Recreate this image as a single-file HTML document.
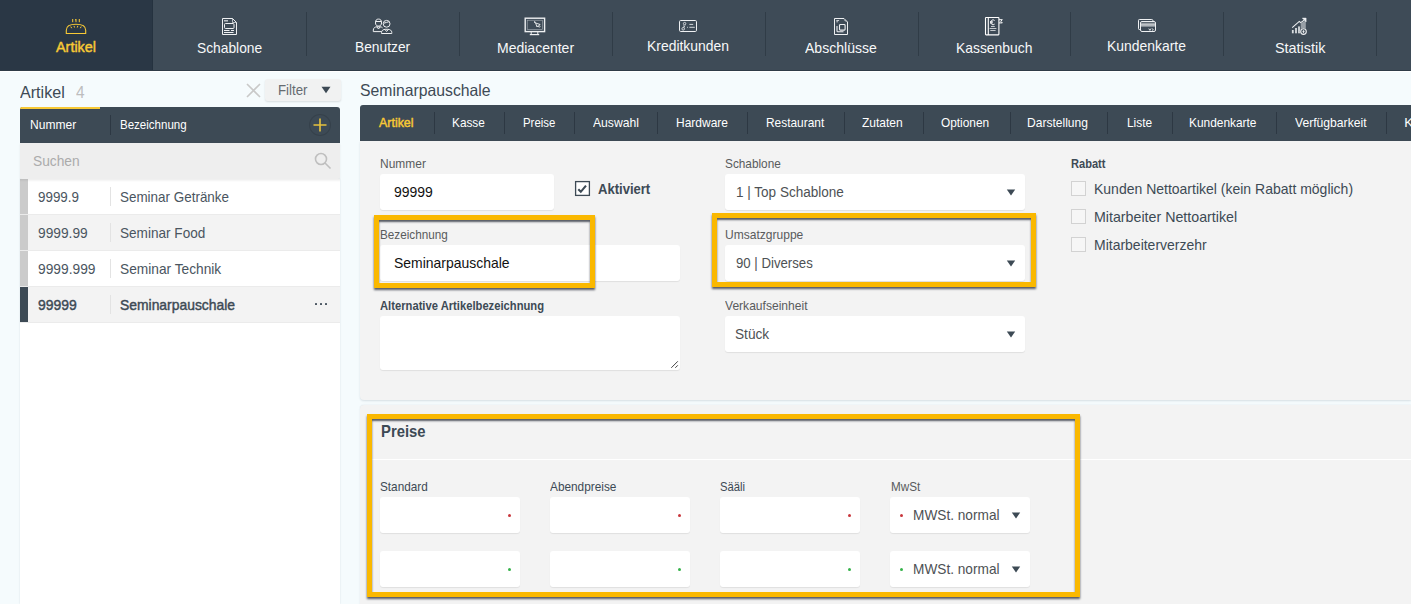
<!DOCTYPE html>
<html><head><meta charset="utf-8"><style>
html,body{margin:0;padding:0}
body{width:1411px;height:604px;overflow:hidden;position:relative;background:#f5fbfd;font-family:"Liberation Sans", sans-serif}
.t{position:absolute;white-space:nowrap;line-height:1}
.r{position:absolute}
.ic{position:absolute;overflow:visible}
.hl{position:absolute;border:5px solid #fab800;box-shadow:0 2px 2px rgba(20,25,40,.7), inset 0 2px 2px rgba(20,25,40,.7)}
</style></head><body>
<div class="r" style="left:0px;top:0px;width:1411px;height:71px;background:#3e4b57"></div>
<div class="r" style="left:0px;top:0px;width:153px;height:71px;background:#2a3745"></div>
<div class="r" style="left:152px;top:0px;width:1px;height:71px;background:#25323f"></div>
<div class="r" style="left:0px;top:70px;width:1411px;height:1px;background:#2f3b47"></div>
<div class="r" style="left:0px;top:71px;width:1411px;height:1px;background:#ffffff"></div>
<div class="r" style="left:306px;top:12px;width:1px;height:44px;background:#303c47"></div>
<div class="r" style="left:459px;top:12px;width:1px;height:44px;background:#303c47"></div>
<div class="r" style="left:612px;top:12px;width:1px;height:44px;background:#303c47"></div>
<div class="r" style="left:765px;top:12px;width:1px;height:44px;background:#303c47"></div>
<div class="r" style="left:918px;top:12px;width:1px;height:44px;background:#303c47"></div>
<div class="r" style="left:1070px;top:12px;width:1px;height:44px;background:#303c47"></div>
<div class="r" style="left:1223px;top:12px;width:1px;height:44px;background:#303c47"></div>
<div class="r" style="left:1376px;top:12px;width:1px;height:44px;background:#303c47"></div>
<div class="t" style="left:56.20px;top:39.10px;font-size:15px;color:#f8c935;-webkit-text-stroke:0.45px currentColor;transform:scaleX(0.9592);transform-origin:0 0;">Artikel</div>
<div class="t" style="left:196.50px;top:40.10px;font-size:15px;color:#f7f8f9;transform:scaleX(0.9196);transform-origin:0 0;">Schablone</div>
<div class="t" style="left:354.60px;top:39.10px;font-size:15px;color:#f7f8f9;transform:scaleX(0.9183);transform-origin:0 0;">Benutzer</div>
<div class="t" style="left:496.60px;top:40.10px;font-size:15px;color:#f7f8f9;transform:scaleX(0.9333);transform-origin:0 0;">Mediacenter</div>
<div class="t" style="left:647.20px;top:38.40px;font-size:15px;color:#f7f8f9;transform:scaleX(0.9276);transform-origin:0 0;">Kreditkunden</div>
<div class="t" style="left:805.10px;top:40.10px;font-size:15px;color:#f7f8f9;transform:scaleX(0.9361);transform-origin:0 0;">Abschlüsse</div>
<div class="t" style="left:955.70px;top:40.10px;font-size:15px;color:#f7f8f9;transform:scaleX(0.9249);transform-origin:0 0;">Kassenbuch</div>
<div class="t" style="left:1107.40px;top:38.40px;font-size:15px;color:#f7f8f9;transform:scaleX(0.9271);transform-origin:0 0;">Kundenkarte</div>
<div class="t" style="left:1274.50px;top:40.10px;font-size:15px;color:#f7f8f9;transform:scaleX(0.9601);transform-origin:0 0;">Statistik</div>

<svg class="ic" style="left:64px;top:17px" width="24" height="19" viewBox="0 0 24 19" fill="none" stroke="#f8c935" stroke-width="1.1">
 <path d="M2.3 16.5 V13.2 C2.3 9.3 6 7.3 12 7.3 C18 7.3 21.7 9.3 21.7 13.2 V16.5 Z"/>
 <path d="M6.8 9.6 l.9 1.6 M10 8.9 l.5 1.6 M13.8 8.9 l-.5 1.6 M17.2 9.6 l-.9 1.6" stroke-width="1"/>
 <path d="M8.7 2 v3.2 M12 2 v3.2 M15.3 2 v3.2 M11 2.8 h1" stroke-width="1"/>
</svg>
<svg class="ic" style="left:222px;top:18px" width="16" height="18" viewBox="0 0 16 18" fill="none" stroke="#eef0f2" stroke-width="1">
 <path d="M0.5 0.5 H10.5 L14.5 4.5 V16.5 H0.5 Z"/>
 <path d="M10.5 0.5 V4.5 H14.5" stroke-width=".7"/>
 <rect x="2.5" y="5.5" width="9.5" height="5" rx="1"/>
 <path d="M2 2.8 H6" stroke-width="1.4" stroke="#c9ced2"/>
 <path d="M2 12.5 H7.5 M9 12.5 H12 M2 14.5 H11.5"/>
</svg>
<svg class="ic" style="left:372px;top:18px" width="22" height="17" viewBox="0 0 22 17" fill="none" stroke="#eef0f2" stroke-width="1">
 <path d="M3.5 5 C3.5 2 4.5 1.1 6.5 1.1 C8.5 1.1 9.5 2 9.5 5 C9.5 7 8.3 8 6.5 8 C4.7 8 3.5 7 3.5 5 Z"/>
 <path d="M3.5 3.5 H9.5"/>
 <path d="M1.3 13.6 V12 C1.3 10 3 8.8 5 8.8 H8 C9.2 8.8 10 9.2 10.5 9.8"/>
 <path d="M1.3 13.6 H9.5"/>
 <path d="M4.8 8.8 L6.5 11 L8.2 8.8"/>
 <circle cx="14.6" cy="5.8" r="3.4"/>
 <path d="M12 5.2 C13.5 4.6 15.2 4.2 16.8 3.8"/>
 <path d="M9.5 15.5 V14.5 C9.5 12.5 11.3 11.3 13.5 11.3 H15.8 C18 11.3 19.8 12.5 19.8 14.5 V15.5 Z"/>
 <path d="M12.8 11.3 L14.6 13.5 L16.4 11.3"/>
</svg>
<svg class="ic" style="left:524px;top:17px" width="22" height="19" viewBox="0 0 22 19" fill="none" stroke="#eef0f2" stroke-width="1.4">
 <rect x="1.2" y="1.2" width="19.4" height="13.4"/>
 <rect x="3.2" y="3.2" width="15.4" height="9.4" stroke-width=".6" stroke="#aab2b8"/>
 <path d="M7.2 14.8 v2.2 M13.8 14.8 v2.2" stroke-width="1"/>
 <path d="M5.8 17.6 H15.2" stroke-width="1.2"/>
 <path d="M10 5.3 l1.8 .3 M10.6 4 l.3 1.6" stroke-width=".8"/>
 <path d="M11.6 6 L13 10 L14 8.8 L15.3 10.3 L16 9.6 L14.8 8.2 L16.2 7.5 Z" stroke-width=".9"/>
</svg>
<svg class="ic" style="left:678px;top:19px" width="20" height="14" viewBox="0 0 20 14" fill="none" stroke="#eef0f2" stroke-width="1">
 <rect x="1.5" y="1.5" width="17" height="11" rx="1.2"/>
 <circle cx="6.6" cy="4.6" r="1.2" stroke-width=".8"/>
 <path d="M5.2 6.6 L6.8 8.2 M7 6.5 L5.6 8.4" stroke-width=".8"/>
 <circle cx="5.2" cy="9.8" r="1.3" stroke-width=".8"/>
 <path d="M9.2 8.3 h.8" stroke-width=".9"/>
 <path d="M11.4 5.4 H15.2 M11.4 8.3 H16.8" stroke-width="1" stroke="#d3d7db"/>
</svg>
<svg class="ic" style="left:833px;top:17px" width="16" height="19" viewBox="0 0 16 19" fill="none" stroke="#eef0f2" stroke-width="1">
 <path d="M1.5 1.5 H11 L14.5 5 V17.5 H1.5 Z"/>
 <path d="M11.3 2.8 L13.2 4.7" stroke-width=".8"/>
 <rect x="6.5" y="7.5" width="5.6" height="5.6" rx=".9" stroke-width="1.1"/>
 <path d="M4 9 V14 C4 14.5 4.3 14.8 4.8 14.8 H10.5" stroke-width="1.1"/>
 <path d="M3.3 3.5 h2.8 M3.3 4.8 h1.8" stroke="#c9ced2"/>
</svg>
<svg class="ic" style="left:984px;top:16px" width="20" height="20" viewBox="0 0 20 20" fill="none" stroke="#ffffff" stroke-width="1.1">
 <rect x="1.5" y="1.5" width="13.4" height="17.4" rx=".6"/>
 <path d="M4.3 1.5 V18.9"/>
 <path d="M15 3.7 H18.3 L16.8 5.3 L18.3 6.9 H15" stroke-width="1"/>
 <path d="M10.6 4.5 C10.2 4.1 9.7 3.9 9.1 3.9 C7.7 3.9 6.8 5 6.8 6.3 C6.8 7.6 7.7 8.7 9.1 8.7 C9.7 8.7 10.2 8.5 10.6 8.1 M6 5.8 H8.8 M6 6.9 H8.8" stroke-width="1"/>
 <path d="M7 10.5 H10.8 M5.6 12.5 H12.4 M6.3 14.5 H11.6" stroke-width="1" stroke="#c5cace"/>
</svg>
<svg class="ic" style="left:1137px;top:18px" width="20" height="16" viewBox="0 0 20 16" fill="none" stroke="#eef0f2" stroke-width="1">
 <path d="M3 11.5 H2.3 C1.8 11.5 1.5 11.2 1.5 10.7 V2.3 C1.5 1.8 1.8 1.5 2.3 1.5 H14.8 C15.5 1.5 16 2 16 2.7 V3.2"/>
 <rect x="3.5" y="3.5" width="15" height="10" rx="1.5"/>
 <rect x="4" y="4.6" width="14" height="3.8" fill="#8e969d" stroke="none"/>
 <path d="M4 6.3 H18 M4 7.9 H18" stroke="#d5d9dc" stroke-width=".8"/>
 <path d="M11.8 10.6 L12.9 12.4 L13.9 10.6 M15.2 10.4 L16.3 11.9 L15.2 12.4" stroke-width=".9"/>
</svg>
<svg class="ic" style="left:1291px;top:17px" width="17" height="19" viewBox="0 0 17 19" fill="none" stroke="#eef0f2" stroke-width="1.1">
 <path d="M9.7 6.3 L14.8 3.6 V14 H9.7 Z" fill="#98a0a7" stroke="none"/>
 <path d="M1.2 10.6 L8.3 4.4 L9.7 5.6 L13.2 3.1"/>
 <path d="M11.3 1.1 H15.1 V4.9 Z" fill="#eef0f2" stroke-width=".5"/>
 <rect x="0.9" y="13" width="1.8" height="3.3" fill="#d9dde0" stroke="none"/>
 <rect x="4.1" y="11" width="1.8" height="5.3" fill="#d9dde0" stroke="none"/>
 <rect x="7.1" y="9.4" width="1.8" height="6.9" fill="#d9dde0" stroke="none"/>
 <circle cx="12.5" cy="14.6" r="3.6" fill="#3e4b57" stroke="none"/>
 <circle cx="12.5" cy="14.6" r="2.8" fill="#3e4b57"/>
 <path d="M12.5 12.9 L13.6 14.3 L12.5 16.4 L11.4 14.3 Z" fill="#eef0f2" stroke="none"/>
</svg>

<div class="t" style="left:20.20px;top:83.90px;font-size:16.3px;color:#3d4a55;transform:scaleX(0.9890);transform-origin:0 0;">Artikel</div>
<div class="t" style="left:75.80px;top:83.90px;font-size:16.3px;color:#bdbdbd;transform:scaleX(0.9451);transform-origin:0 0;">4</div>
<svg class="ic" style="left:246px;top:83px" width="15" height="15" viewBox="0 0 15 15" stroke="#c9c9c9" stroke-width="1.6"><path d="M1 1 L14 14 M14 1 L1 14"/></svg>
<div class="r" style="left:265px;top:79px;width:76px;height:22px;background:#f1f2f2;border-radius:3px;box-shadow:0 1px 2px rgba(0,0,0,.12)"></div>
<div class="t" style="left:277.50px;top:82.63px;font-size:14.5px;color:#666b70;transform:scaleX(0.9161);transform-origin:0 0;">Filter</div>
<svg class="ic" style="left:321px;top:86px" width="10" height="8" viewBox="0 0 10 8"><path d="M0.5 0.8 H9.5 L5 7.2 Z" fill="#3d4a55"/></svg>
<div class="r" style="left:20px;top:107px;width:320px;height:36px;background:#3d4a55;border-radius:3px 3px 0 0"></div>
<div class="r" style="left:20px;top:107px;width:80px;height:2px;background:#f8c935;border-radius:3px 0 0 0"></div>
<div class="t" style="left:30.30px;top:118.54px;font-size:12px;color:#ffffff;transform:scaleX(1.0043);transform-origin:0 0;">Nummer</div>
<div class="r" style="left:110px;top:115px;width:1px;height:20px;background:#2d3843"></div>
<div class="t" style="left:120.40px;top:118.54px;font-size:12px;color:#ffffff;transform:scaleX(0.9611);transform-origin:0 0;">Bezeichnung</div>
<div class="r" style="left:310px;top:115px;width:20px;height:20px;border-radius:50%;box-shadow:0 0 0 1px rgba(0,0,0,.12)"></div>
<svg class="ic" style="left:313px;top:118px" width="14" height="14" viewBox="0 0 14 14" stroke="#e6c23e" stroke-width="1.6"><path d="M7 0.5 V13.5 M0.5 7 H13.5"/></svg>
<div class="r" style="left:20px;top:179px;width:320px;height:425px;background:#ffffff;box-shadow:0 0 1.5px rgba(40,70,90,.15)"></div>
<div class="r" style="left:20px;top:143px;width:320px;height:36px;background:#eeeeee;box-shadow:0 1px 2px rgba(0,0,0,.08);border-radius:0 0 2px 2px"></div>
<div class="t" style="left:33.30px;top:153.40px;font-size:15px;color:#ababab;transform:scaleX(0.9175);transform-origin:0 0;">Suchen</div>
<svg class="ic" style="left:313.5px;top:151.5px" width="18" height="18" viewBox="0 0 18 18" fill="none" stroke="#bfbfbf" stroke-width="1.6"><circle cx="7" cy="7" r="5.5"/><path d="M11 11 L16.5 16.5"/></svg>
<div class="r" style="left:20px;top:179px;width:320px;height:36px;background:#ffffff"></div>
<div class="r" style="left:20px;top:214px;width:320px;height:1px;background:#ebebeb"></div>
<div class="r" style="left:20px;top:179px;width:8px;height:35px;background:#cbcbcb"></div>
<div class="r" style="left:110px;top:187px;width:1px;height:19px;background:#e3e3e3"></div>
<div class="t" style="left:37.80px;top:189.10px;font-size:15px;color:#4a5560;transform:scaleX(0.8932);transform-origin:0 0;">9999.9</div>
<div class="t" style="left:120.00px;top:189.10px;font-size:15px;color:#4a5560;transform:scaleX(0.8956);transform-origin:0 0;">Seminar Getränke</div>
<div class="r" style="left:20px;top:215px;width:320px;height:36px;background:#f3f3f3"></div>
<div class="r" style="left:20px;top:250px;width:320px;height:1px;background:#ebebeb"></div>
<div class="r" style="left:20px;top:215px;width:8px;height:35px;background:#cbcbcb"></div>
<div class="r" style="left:110px;top:223px;width:1px;height:19px;background:#e3e3e3"></div>
<div class="t" style="left:37.80px;top:225.10px;font-size:15px;color:#4a5560;transform:scaleX(0.9170);transform-origin:0 0;">9999.99</div>
<div class="t" style="left:120.00px;top:225.10px;font-size:15px;color:#4a5560;transform:scaleX(0.9055);transform-origin:0 0;">Seminar Food</div>
<div class="r" style="left:20px;top:251px;width:320px;height:36px;background:#ffffff"></div>
<div class="r" style="left:20px;top:286px;width:320px;height:1px;background:#ebebeb"></div>
<div class="r" style="left:20px;top:251px;width:8px;height:35px;background:#cbcbcb"></div>
<div class="r" style="left:110px;top:259px;width:1px;height:19px;background:#e3e3e3"></div>
<div class="t" style="left:37.80px;top:261.10px;font-size:15px;color:#4a5560;transform:scaleX(0.9185);transform-origin:0 0;">9999.999</div>
<div class="t" style="left:120.00px;top:261.10px;font-size:15px;color:#4a5560;transform:scaleX(0.9151);transform-origin:0 0;">Seminar Technik</div>
<div class="r" style="left:20px;top:287px;width:320px;height:36px;background:#f3f3f3"></div>
<div class="r" style="left:20px;top:322px;width:320px;height:1px;background:#ebebeb"></div>
<div class="r" style="left:20px;top:287px;width:8px;height:35px;background:#3d4a55"></div>
<div class="r" style="left:110px;top:295px;width:1px;height:19px;background:#e3e3e3"></div>
<div class="t" style="left:37.80px;top:297.10px;font-size:15px;color:#3d4a55;-webkit-text-stroke:0.45px currentColor;transform:scaleX(0.9305);transform-origin:0 0;">99999</div>
<div class="t" style="left:120.00px;top:297.10px;font-size:15px;color:#3d4a55;-webkit-text-stroke:0.45px currentColor;transform:scaleX(0.9259);transform-origin:0 0;">Seminarpauschale</div>
<div class="r" style="left:20px;top:179px;width:320px;height:3px;background:linear-gradient(rgba(0,0,0,.07),rgba(0,0,0,0))"></div>
<div class="r" style="left:315px;top:303px;width:2px;height:2px;background:#4a5560;border-radius:.5px"></div>
<div class="r" style="left:320px;top:303px;width:2px;height:2px;background:#4a5560;border-radius:.5px"></div>
<div class="r" style="left:325px;top:303px;width:2px;height:2px;background:#4a5560;border-radius:.5px"></div>
<div class="t" style="left:360.40px;top:82.03px;font-size:16.5px;color:#3d4a55;transform:scaleX(0.9554);transform-origin:0 0;">Seminarpauschale</div>
<div class="r" style="left:360px;top:105px;width:1051px;height:36px;background:#3d4a55;border-radius:3px 0 0 0"></div>
<div class="t" style="left:378.80px;top:115.83px;font-size:13.2px;color:#f8c935;-webkit-text-stroke:0.45px currentColor;transform:scaleX(0.9428);transform-origin:0 0;">Artikel</div>
<div class="t" style="left:451.50px;top:115.83px;font-size:13.2px;color:#ffffff;transform:scaleX(0.8965);transform-origin:0 0;">Kasse</div>
<div class="t" style="left:522.70px;top:115.83px;font-size:13.2px;color:#ffffff;transform:scaleX(0.8636);transform-origin:0 0;">Preise</div>
<div class="t" style="left:592.70px;top:115.83px;font-size:13.2px;color:#ffffff;transform:scaleX(0.9198);transform-origin:0 0;">Auswahl</div>
<div class="t" style="left:676.00px;top:115.83px;font-size:13.2px;color:#ffffff;transform:scaleX(0.9091);transform-origin:0 0;">Hardware</div>
<div class="t" style="left:765.90px;top:115.83px;font-size:13.2px;color:#ffffff;transform:scaleX(0.9025);transform-origin:0 0;">Restaurant</div>
<div class="t" style="left:862.30px;top:115.83px;font-size:13.2px;color:#ffffff;transform:scaleX(0.9107);transform-origin:0 0;">Zutaten</div>
<div class="t" style="left:941.30px;top:115.83px;font-size:13.2px;color:#ffffff;transform:scaleX(0.8993);transform-origin:0 0;">Optionen</div>
<div class="t" style="left:1027.00px;top:115.83px;font-size:13.2px;color:#ffffff;transform:scaleX(0.9132);transform-origin:0 0;">Darstellung</div>
<div class="t" style="left:1126.50px;top:115.83px;font-size:13.2px;color:#ffffff;transform:scaleX(0.9032);transform-origin:0 0;">Liste</div>
<div class="t" style="left:1189.40px;top:115.83px;font-size:13.2px;color:#ffffff;transform:scaleX(0.9025);transform-origin:0 0;">Kundenkarte</div>
<div class="t" style="left:1295.00px;top:115.83px;font-size:13.2px;color:#ffffff;transform:scaleX(0.9203);transform-origin:0 0;">Verfügbarkeit</div>
<div class="t" style="left:1404.30px;top:115.83px;font-size:13.2px;color:#ffffff;">K</div>
<div class="r" style="left:434px;top:112px;width:1px;height:22px;background:#2d3843"></div>
<div class="r" style="left:504px;top:112px;width:1px;height:22px;background:#2d3843"></div>
<div class="r" style="left:574px;top:112px;width:1px;height:22px;background:#2d3843"></div>
<div class="r" style="left:657px;top:112px;width:1px;height:22px;background:#2d3843"></div>
<div class="r" style="left:747px;top:112px;width:1px;height:22px;background:#2d3843"></div>
<div class="r" style="left:844px;top:112px;width:1px;height:22px;background:#2d3843"></div>
<div class="r" style="left:923px;top:112px;width:1px;height:22px;background:#2d3843"></div>
<div class="r" style="left:1010px;top:112px;width:1px;height:22px;background:#2d3843"></div>
<div class="r" style="left:1107px;top:112px;width:1px;height:22px;background:#2d3843"></div>
<div class="r" style="left:1172px;top:112px;width:1px;height:22px;background:#2d3843"></div>
<div class="r" style="left:1276px;top:112px;width:1px;height:22px;background:#2d3843"></div>
<div class="r" style="left:1386px;top:112px;width:1px;height:22px;background:#2d3843"></div>
<div class="r" style="left:360px;top:141px;width:1051px;height:259px;background:#f3f3f3;border-radius:0 0 0 4px;box-shadow:0 1px 2px rgba(40,70,90,.15)"></div>
<div class="r" style="left:360px;top:405px;width:1051px;height:235px;background:#f3f3f3;border-radius:4px 0 0 0;box-shadow:0 0 1.5px rgba(40,70,90,.15)"></div>
<div class="t" style="left:380.40px;top:158.33px;font-size:12.6px;color:#595b5d;transform:scaleX(0.9503);transform-origin:0 0;">Nummer</div>
<div class="r" style="left:380px;top:174px;width:174px;height:36px;background:#fff;border-radius:3px;box-shadow:0 1px 1px rgba(0,0,0,.08)"></div>
<div class="t" style="left:394.00px;top:184.25px;font-size:15.3px;color:#111;transform:scaleX(0.9129);transform-origin:0 0;">99999</div>
<svg class="ic" style="left:574px;top:180px" width="17" height="17" viewBox="0 0 17 17" fill="none" stroke="#3d4a55"><rect x="1.6" y="1.6" width="13.8" height="13.8" fill="#fff" stroke-width="1.3"/><path d="M4.3 9.3 L6.8 11.8 L12 5.6" stroke-width="2.1"/></svg>
<div class="t" style="left:598.40px;top:181.30px;font-size:15px;color:#3d4a55;font-weight:bold;transform:scaleX(0.8700);transform-origin:0 0;">Aktiviert</div>
<div class="t" style="left:380.40px;top:229.33px;font-size:12.6px;color:#595b5d;transform:scaleX(0.9300);transform-origin:0 0;">Bezeichnung</div>
<div class="r" style="left:380px;top:245px;width:300px;height:36px;background:#fff;border-radius:3px;box-shadow:0 1px 1px rgba(0,0,0,.08)"></div>
<div class="t" style="left:394.00px;top:255.30px;font-size:15px;color:#111;transform:scaleX(0.9300);transform-origin:0 0;">Seminarpauschale</div>
<div class="t" style="left:380.20px;top:299.66px;font-size:12.8px;color:#3d4a55;font-weight:bold;transform:scaleX(0.8761);transform-origin:0 0;">Alternative Artikelbezeichnung</div>
<div class="r" style="left:380px;top:316px;width:300px;height:54px;background:#fff;border-radius:3px;box-shadow:0 1px 1px rgba(0,0,0,.08)"></div>
<svg class="ic" style="left:670px;top:360px" width="9" height="9" viewBox="0 0 9 9" stroke="#444" stroke-width="1"><path d="M1.3 7.8 L7.8 1.3 M5.3 7.8 L7.8 5.3"/></svg>
<div class="t" style="left:724.80px;top:158.33px;font-size:12.6px;color:#595b5d;transform:scaleX(0.9379);transform-origin:0 0;">Schablone</div>
<div class="r" style="left:725px;top:174px;width:300px;height:36px;background:#fff;border-radius:3px;box-shadow:0 1px 1px rgba(0,0,0,.08)"></div>
<div class="t" style="left:735.50px;top:184.18px;font-size:15.5px;color:#4d5154;transform:scaleX(0.8729);transform-origin:0 0;">1 | Top Schablone</div>
<div class="t" style="left:724.80px;top:229.33px;font-size:12.6px;color:#595b5d;transform:scaleX(0.9560);transform-origin:0 0;">Umsatzgruppe</div>
<div class="r" style="left:725px;top:245px;width:300px;height:36px;background:#fff;border-radius:3px;box-shadow:0 1px 1px rgba(0,0,0,.08)"></div>
<div class="t" style="left:735.50px;top:255.18px;font-size:15.5px;color:#4d5154;transform:scaleX(0.8514);transform-origin:0 0;">90 | Diverses</div>
<div class="t" style="left:725.20px;top:299.73px;font-size:12.6px;color:#595b5d;transform:scaleX(0.9582);transform-origin:0 0;">Verkaufseinheit</div>
<div class="r" style="left:725px;top:316px;width:300px;height:36px;background:#fff;border-radius:3px;box-shadow:0 1px 1px rgba(0,0,0,.08)"></div>
<div class="t" style="left:735.00px;top:326.18px;font-size:15.5px;color:#4d5154;transform:scaleX(0.8814);transform-origin:0 0;">Stück</div>
<svg class="ic" style="left:1006px;top:189px" width="10" height="7" viewBox="0 0 10 7"><path d="M0.8 0.5 H9.2 L5 6.5 Z" fill="#3d4a55"/></svg>
<svg class="ic" style="left:1006px;top:260px" width="10" height="7" viewBox="0 0 10 7"><path d="M0.8 0.5 H9.2 L5 6.5 Z" fill="#3d4a55"/></svg>
<svg class="ic" style="left:1006px;top:331px" width="10" height="7" viewBox="0 0 10 7"><path d="M0.8 0.5 H9.2 L5 6.5 Z" fill="#3d4a55"/></svg>
<div class="t" style="left:1070.60px;top:158.33px;font-size:12.6px;color:#3d4a55;font-weight:bold;transform:scaleX(0.8801);transform-origin:0 0;">Rabatt</div>
<div class="r" style="left:1071px;top:181px;width:13px;height:13px;border:1px solid #d2d2d2;background:#f6f6f6"></div>
<div class="t" style="left:1094.40px;top:181.30px;font-size:15px;color:#3d4a55;transform:scaleX(0.9330);transform-origin:0 0;">Kunden Nettoartikel (kein Rabatt möglich)</div>
<div class="r" style="left:1071px;top:209px;width:13px;height:13px;border:1px solid #d2d2d2;background:#f6f6f6"></div>
<div class="t" style="left:1094.40px;top:209.30px;font-size:15px;color:#3d4a55;transform:scaleX(0.9483);transform-origin:0 0;">Mitarbeiter Nettoartikel</div>
<div class="r" style="left:1071px;top:237px;width:13px;height:13px;border:1px solid #d2d2d2;background:#f6f6f6"></div>
<div class="t" style="left:1094.40px;top:237.30px;font-size:15px;color:#3d4a55;transform:scaleX(0.9322);transform-origin:0 0;">Mitarbeiterverzehr</div>
<div class="t" style="left:380.70px;top:423.66px;font-size:16.7px;color:#3d4a55;font-weight:bold;transform:scaleX(0.8882);transform-origin:0 0;">Preise</div>
<div class="r" style="left:372px;top:459px;width:1039px;height:1px;background:#ffffff"></div>
<div class="t" style="left:380.20px;top:481.16px;font-size:12.8px;color:#3d4a55;transform:scaleX(0.9192);transform-origin:0 0;">Standard</div>
<div class="t" style="left:550.10px;top:481.16px;font-size:12.8px;color:#3d4a55;transform:scaleX(0.9235);transform-origin:0 0;">Abendpreise</div>
<div class="t" style="left:720.30px;top:481.16px;font-size:12.8px;color:#3d4a55;transform:scaleX(0.8807);transform-origin:0 0;">Sääli</div>
<div class="t" style="left:890.60px;top:481.16px;font-size:12.8px;color:#595b5d;transform:scaleX(0.9156);transform-origin:0 0;">MwSt</div>
<div class="r" style="left:380px;top:497px;width:140px;height:36px;background:#fff;border-radius:3px;box-shadow:0 1px 1px rgba(0,0,0,.08)"></div>
<div class="r" style="left:508px;top:514px;width:3px;height:3px;border-radius:50%;background:#c8363c"></div>
<div class="r" style="left:380px;top:551px;width:140px;height:36px;background:#fff;border-radius:3px;box-shadow:0 1px 1px rgba(0,0,0,.08)"></div>
<div class="r" style="left:508px;top:568px;width:3px;height:3px;border-radius:50%;background:#35b34a"></div>
<div class="r" style="left:550px;top:497px;width:140px;height:36px;background:#fff;border-radius:3px;box-shadow:0 1px 1px rgba(0,0,0,.08)"></div>
<div class="r" style="left:678px;top:514px;width:3px;height:3px;border-radius:50%;background:#c8363c"></div>
<div class="r" style="left:550px;top:551px;width:140px;height:36px;background:#fff;border-radius:3px;box-shadow:0 1px 1px rgba(0,0,0,.08)"></div>
<div class="r" style="left:678px;top:568px;width:3px;height:3px;border-radius:50%;background:#35b34a"></div>
<div class="r" style="left:720px;top:497px;width:140px;height:36px;background:#fff;border-radius:3px;box-shadow:0 1px 1px rgba(0,0,0,.08)"></div>
<div class="r" style="left:848px;top:514px;width:3px;height:3px;border-radius:50%;background:#c8363c"></div>
<div class="r" style="left:720px;top:551px;width:140px;height:36px;background:#fff;border-radius:3px;box-shadow:0 1px 1px rgba(0,0,0,.08)"></div>
<div class="r" style="left:848px;top:568px;width:3px;height:3px;border-radius:50%;background:#35b34a"></div>
<div class="r" style="left:890px;top:497px;width:140px;height:36px;background:#fff;border-radius:3px;box-shadow:0 1px 1px rgba(0,0,0,.08)"></div>
<div class="r" style="left:900px;top:514px;width:3px;height:3px;border-radius:50%;background:#c8363c"></div>
<div class="t" style="left:912.50px;top:507.30px;font-size:15px;color:#4d5154;transform:scaleX(0.9105);transform-origin:0 0;">MWSt. normal</div>
<svg class="ic" style="left:1011px;top:512px" width="10" height="7" viewBox="0 0 10 7"><path d="M0.8 0.5 H9.2 L5 6.5 Z" fill="#3d4a55"/></svg>
<div class="r" style="left:890px;top:551px;width:140px;height:36px;background:#fff;border-radius:3px;box-shadow:0 1px 1px rgba(0,0,0,.08)"></div>
<div class="r" style="left:900px;top:568px;width:3px;height:3px;border-radius:50%;background:#35b34a"></div>
<div class="t" style="left:912.50px;top:561.30px;font-size:15px;color:#4d5154;transform:scaleX(0.9105);transform-origin:0 0;">MWSt. normal</div>
<svg class="ic" style="left:1011px;top:566px" width="10" height="7" viewBox="0 0 10 7"><path d="M0.8 0.5 H9.2 L5 6.5 Z" fill="#3d4a55"/></svg>
<div class="hl" style="left:374px;top:215px;width:211px;height:63px"></div>
<div class="hl" style="left:712px;top:213px;width:314px;height:64px"></div>
<div class="hl" style="left:367px;top:414px;width:703px;height:173px"></div>
</body></html>
